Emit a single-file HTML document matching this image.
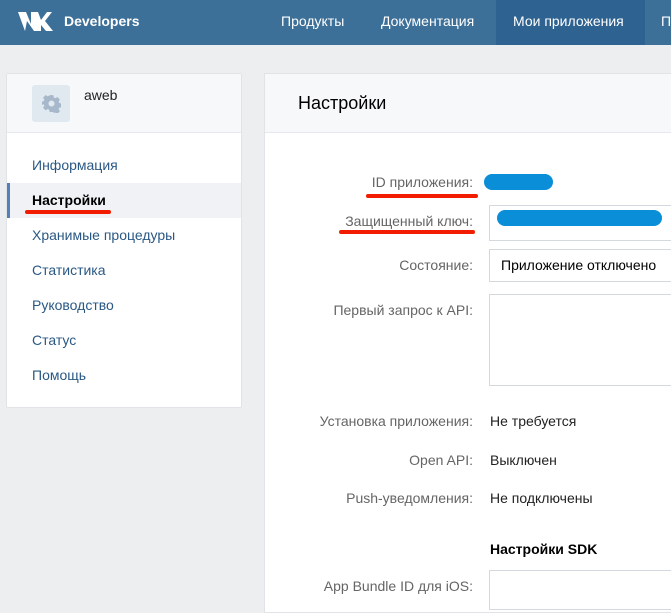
<!DOCTYPE html>
<html><head><meta charset="utf-8"><style>
*{margin:0;padding:0;box-sizing:border-box}
body{width:671px;height:599px;overflow:hidden;background:#edeef0;font-family:"Liberation Sans","DejaVu Sans",sans-serif;font-size:14px;color:#222;position:relative}
.hd{position:absolute;left:0;top:0;width:671px;height:45px;background:#3d7099}
.hd .t{position:absolute;top:13px;color:#fff;font-size:14px}
.act{position:absolute;left:496px;top:0;width:149px;height:45px;background:#2e6290}
.lp{position:absolute;left:6px;top:73px;width:236px;height:335px;background:#fff;border:1px solid #e1e3e6;border-radius:2px}
.ava{position:absolute;left:25px;top:11px;width:38px;height:37px;background:#e0e8f0;border-radius:3px}
.lp .nm{position:absolute;left:77px;top:13px;font-size:14px;color:#222}
.lp .sep{position:absolute;left:0;top:58px;width:234px;height:1px;background:#e7e8ec}
.lp .top{position:absolute;left:0;top:0;width:234px;height:58px;background:#f7f8fa}
.it{position:absolute;left:25px;font-size:14px;color:#2a5885}
.sel{position:absolute;left:0;top:109px;width:234px;height:35px;background:#f0f2f5;border-left:3px solid #5181b8}
.rp{position:absolute;left:264px;top:73px;width:420px;height:540px;background:#fff;border:1px solid #e1e3e6}
.rp .top{position:absolute;left:0;top:0;width:100%;height:59px;background:#f7f8fa;border-bottom:1px solid #e7e8ec}
.rp h1{position:absolute;left:33px;top:19px;font-weight:normal;font-size:18px;color:#000}
.lb{position:absolute;right:198px;font-size:14px;color:#656565;text-align:right;white-space:nowrap}
.v{position:absolute;left:490px;font-size:14px;color:#222}
.box{position:absolute;left:489px;border:1px solid #d3d9de;background:#fff;width:200px}
.red{position:absolute;height:4px;background:#f21c00;border-radius:2px}
.blue{position:absolute;height:16px;background:#0a8ed8;border-radius:8px}
</style></head><body>
<div class="hd">
<div class="act"></div>
<svg style="position:absolute;left:17px;top:11px" width="36" height="21" viewBox="0 0 36 21"><path d="M1 1h8l5 12V1h7l3 8 6-8h5l-7 9 8 10h-7l-5-6v6h-7L10 10l-2 10z" fill="#fff"/></svg>
<div class="t" style="left:64px;font-weight:bold">Developers</div>
<div class="t" style="left:281px">Продукты</div>
<div class="t" style="left:381px">Документация</div>
<div class="t" style="left:513px">Мои приложения</div>
<div class="t" style="left:661px">П</div>
</div>
<div class="lp">
<div class="top"></div>
<div class="ava"><svg style="position:absolute;left:10px;top:9px" width="19" height="19" viewBox="0 0 20 20"><path d="M10 1l2 .3.4 2.4 1.7.8 2-1.4 2.8 2.8-1.4 2 .8 1.7 2.4.4v4l-2.4.4-.8 1.7 1.4 2-2.8 2.8-2-1.4-1.7.8L12 19h-4l-.4-2.4-1.7-.8-2 1.4-2.8-2.8 1.4-2-.8-1.7L-.7 12V8l2.4-.4.8-1.7-1.4-2 2.8-2.8 2 1.4 1.7-.8L8 1.3z" fill="#a7b8ca"/><circle cx="10" cy="10" r="3.2" fill="#e0e8f0"/></svg></div>
<div class="nm">aweb</div>
<div class="sep"></div>
<div class="sel"></div>
<div class="it" style="top:83px">Информация</div>
<div class="it" style="top:118px;color:#000;font-weight:bold">Настройки</div>
<div class="red" style="left:18px;top:136px;width:86px"></div>
<div class="it" style="top:153px">Хранимые процедуры</div>
<div class="it" style="top:188px">Статистика</div>
<div class="it" style="top:223px">Руководство</div>
<div class="it" style="top:258px">Статус</div>
<div class="it" style="top:293px">Помощь</div>
</div>
<div class="rp"><div class="top"></div><h1>Настройки</h1></div>
<div class="lb" style="top:174px">ID приложения:</div>
<div class="red" style="left:366px;top:194px;width:112px"></div>
<div class="blue" style="left:484px;top:174px;width:69px"></div>
<div class="box" style="top:205px;height:36px"></div>
<div class="lb" style="top:213px">Защищенный ключ:</div>
<div class="red" style="left:339px;top:230px;width:136px"></div>
<div class="blue" style="left:497px;top:210px;width:165px"></div>
<div class="box" style="top:249px;height:33px"></div>
<div class="lb" style="top:257px">Состояние:</div>
<div class="v" style="left:501px;top:257px;color:#000">Приложение отключено</div>
<div class="box" style="top:294px;height:92px"></div>
<div class="lb" style="top:302px">Первый запрос к API:</div>
<div class="lb" style="top:413px">Установка приложения:</div><div class="v" style="top:413px">Не требуется</div>
<div class="lb" style="top:452px">Open API:</div><div class="v" style="top:452px">Выключен</div>
<div class="lb" style="top:490px">Push-уведомления:</div><div class="v" style="top:490px">Не подключены</div>
<div class="v" style="top:541px;font-weight:bold;color:#000">Настройки SDK</div>
<div class="box" style="top:570px;height:40px"></div>
<div class="lb" style="top:578px">App Bundle ID для iOS:</div>
</body></html>
